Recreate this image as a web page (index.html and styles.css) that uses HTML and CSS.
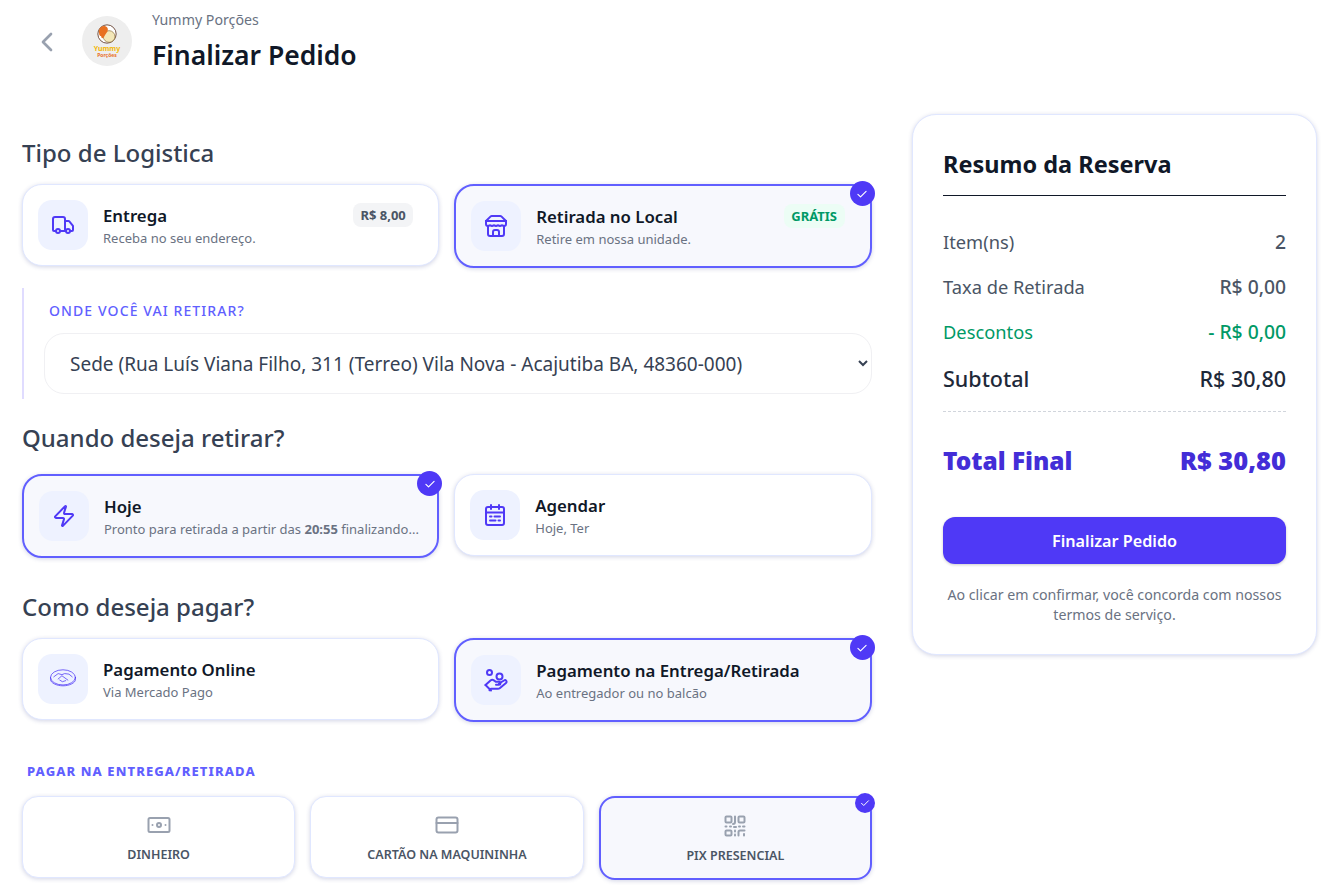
FILE: index.html
```html
<!DOCTYPE html>
<html lang="pt-BR">
<head>
    <meta charset="utf-8">
    <title>Finalizar Pedido</title>
    <link rel="stylesheet" href="styles.css">
</head>
<body>
    <div class="header">
        <svg class="back" viewBox="0 0 24 24"><path d="M15 18l-6-6 6-6"/></svg>
        <div class="logo">
            <svg class="logo-art" viewBox="0 0 24 24">
                <circle cx="12" cy="12" r="11" fill="#fff" stroke="#5a3320" stroke-width="1"/>
                <circle cx="14.500" cy="15" r="7" fill="#f3e7b8" stroke="#8a6a30" stroke-width=".8"/>
                <path d="M2.500 11C1.500 6 5 2 9 2.500c3.500.5 5 3.500 3.500 6.500l-3 4.500c-1 2-2 3.500-3 3.500-1.500 0-1.500-1.500-1.500-2.500-1.500 0-2.500-1.500-2.500-3.500z" fill="#e8701f"/>
            </svg>
            <span class="logo-name">Yummy</span>
            <span class="logo-sub">Porções</span>
        </div>
        <div>
            <div class="store-name">Yummy Porções</div>
            <h1>Finalizar Pedido</h1>
        </div>
    </div>

    <div class="page">
        <div class="left">
            <h2 class="first">Tipo de Logistica</h2>
            <div class="options">
                <div class="option">
                    <div class="option-icon">
                        <svg viewBox="0 0 24 24"><path d="M14 18V6a2 2 0 0 0-2-2H4a2 2 0 0 0-2 2v11a1 1 0 0 0 1 1h2"/><path d="M15 18H9"/><path d="M19 18h2a1 1 0 0 0 1-1v-3.650a1 1 0 0 0-.22-.624l-3.480-4.350A1 1 0 0 0 17.520 8H14"/><circle cx="17" cy="18" r="2"/><circle cx="7" cy="18" r="2"/></svg>
                    </div>
                    <div class="option-text">
                        <div class="option-title">Entrega</div>
                        <div class="option-sub">Receba no seu endereço.</div>
                    </div>
                    <span class="badge">R$ 8,00</span>
                </div>
                <div class="option selected">
                    <span class="check"><svg viewBox="0 0 24 24"><path d="M5 12.500l4.500 4.500L19 7.500"/></svg></span>
                    <div class="option-icon">
                        <svg viewBox="0 0 24 24"><path d="M2 7l4.410-4.410A2 2 0 0 1 7.830 2h8.340a2 2 0 0 1 1.420.59L22 7"/><path d="M4 12v8a2 2 0 0 0 2 2h12a2 2 0 0 0 2-2v-8"/><path d="M15 22v-4a2 2 0 0 0-2-2h-2a2 2 0 0 0-2 2v4"/><path d="M2 7h20"/><path d="M22 7v3a2 2 0 0 1-2 2 2.700 2.700 0 0 1-1.590-.63.7.7 0 0 0-.82 0A2.700 2.700 0 0 1 16 12a2.700 2.700 0 0 1-1.590-.63.7.7 0 0 0-.82 0A2.700 2.700 0 0 1 12 12a2.700 2.700 0 0 1-1.590-.63.7.7 0 0 0-.82 0A2.700 2.700 0 0 1 8 12a2.700 2.700 0 0 1-1.590-.63.7.7 0 0 0-.82 0A2.700 2.700 0 0 1 4 12a2 2 0 0 1-2-2V7"/></svg>
                    </div>
                    <div class="option-text">
                        <div class="option-title">Retirada no Local</div>
                        <div class="option-sub">Retire em nossa unidade.</div>
                    </div>
                    <span class="badge free">GRÁTIS</span>
                </div>
            </div>

            <div class="pickup">
                <div class="pickup-label">ONDE VOCÊ VAI RETIRAR?</div>
                <select class="pickup-select">
                    <option>Sede (Rua Luís Viana Filho, 311 (Terreo) Vila Nova - Acajutiba BA, 48360-000)</option>
                </select>
            </div>

            <h2 class="when">Quando deseja retirar?</h2>
            <div class="options">
                <div class="option selected">
                    <span class="check"><svg viewBox="0 0 24 24"><path d="M5 12.500l4.500 4.500L19 7.500"/></svg></span>
                    <div class="option-icon">
                        <svg viewBox="0 0 24 24"><path d="M4 14a1 1 0 0 1-.78-1.630l9.900-10.200a.5.5 0 0 1 .86.46l-1.920 6.020A1 1 0 0 0 13 10h7a1 1 0 0 1 .78 1.630l-9.900 10.200a.5.5 0 0 1-.86-.46l1.920-6.020A1 1 0 0 0 11 14z"/></svg>
                    </div>
                    <div class="option-text">
                        <div class="option-title">Hoje</div>
                        <div class="option-sub nowrap">Pronto para retirada a partir das <b>20:55</b> finalizando...</div>
                    </div>
                </div>
                <div class="option">
                    <div class="option-icon">
                        <svg viewBox="0 0 24 24"><rect x="3" y="4" width="18" height="18" rx="2"/><path d="M8 2v4"/><path d="M16 2v4"/><path d="M3 9.500h18"/><path d="M7 13.500h1.500"/><path d="M11.500 13.500H17"/><path d="M7 17.500h5.500"/><path d="M15.500 17.500H17"/></svg>
                    </div>
                    <div class="option-text">
                        <div class="option-title">Agendar</div>
                        <div class="option-sub">Hoje, Ter</div>
                    </div>
                </div>
            </div>

            <h2 class="how">Como deseja pagar?</h2>
            <div class="options">
                <div class="option">
                    <div class="option-icon">
                        <svg class="thin" viewBox="0 0 24 24"><ellipse cx="12" cy="10.500" rx="11.500" ry="7"/><path d="M.5 10.500v2c0 3 5.500 5.800 11.500 5.800s11.500-2.800 11.500-5.800v-2"/><path d="M3.500 10l4-3 3.500 1 2.500-1 4 .5 3 2.500"/><path d="M7.500 12l3.500-3 5.500 4"/><path d="M9 13l2.500 1.500 1.500-.5 1.500-.5"/></svg>
                    </div>
                    <div class="option-text">
                        <div class="option-title">Pagamento Online</div>
                        <div class="option-sub">Via Mercado Pago</div>
                    </div>
                </div>
                <div class="option selected">
                    <span class="check"><svg viewBox="0 0 24 24"><path d="M5 12.500l4.500 4.500L19 7.500"/></svg></span>
                    <div class="option-icon">
                        <svg viewBox="0 0 24 24"><circle cx="5.500" cy="4.500" r="2.500"/><circle cx="15.500" cy="8.500" r="3"/><path d="M1.500 17l5-4.500c1-.8 2-.9 3-.3l2.500 1.600h3a1.500 1.500 0 0 1 0 3h-3"/><path d="M15 15.500l5-3a1.600 1.600 0 0 1 2 2.500l-6 5a3.500 3.500 0 0 1-2.200.8H7l-1.500 1.500"/><path d="M1.500 17L7 22.500"/></svg>
                    </div>
                    <div class="option-text">
                        <div class="option-title">Pagamento na Entrega/Retirada</div>
                        <div class="option-sub">Ao entregador ou no balcão</div>
                    </div>
                </div>
            </div>

            <div class="pay-label">PAGAR NA ENTREGA/RETIRADA</div>
            <div class="methods">
                <div class="method">
                    <svg viewBox="0 0 24 24"><rect x="1.500" y="5" width="21" height="14" rx="1.500"/><circle cx="12" cy="12" r="2"/><path d="M5.500 12h.01"/><path d="M18.500 12h.01"/></svg>
                    <span>DINHEIRO</span>
                </div>
                <div class="method">
                    <svg viewBox="0 0 24 24"><rect x="1.500" y="4.500" width="21" height="15" rx="2"/><path d="M1.500 10h21"/></svg>
                    <span>CARTÃO NA MAQUININHA</span>
                </div>
                <div class="method selected">
                    <span class="check small"><svg viewBox="0 0 24 24"><path d="M5 12.500l4.500 4.500L19 7.500"/></svg></span>
                    <svg viewBox="0 0 24 24"><rect x="2.500" y="2.500" width="6" height="6" rx="1"/><rect x="15.500" y="2.500" width="6" height="6" rx="1"/><rect x="2.500" y="16.500" width="6" height="5" rx="1"/><path d="M12 2.500V8a2 2 0 0 1-2 2"/><path d="M2.500 12.500h1"/><path d="M7 12.500h1"/><path d="M11 13h2"/><path d="M16 12.500h1"/><path d="M20 12.500h1.500"/><path d="M12 16.500v1"/><path d="M12 20.500v1"/><path d="M15.500 21.500V18a1.500 1.500 0 0 1 1.500-1.500h4.500"/><path d="M21 20v1.500"/></svg>
                    <span>PIX PRESENCIAL</span>
                </div>
            </div>
        </div>

        <div class="summary">
            <h3>Resumo da Reserva</h3>
            <div class="rows">
                <div class="row"><span>Item(ns)</span><strong>2</strong></div>
                <div class="row"><span>Taxa de Retirada</span><strong>R$ 0,00</strong></div>
                <div class="row discount"><span>Descontos</span><strong>- R$ 0,00</strong></div>
            </div>
            <div class="row subtotal"><span>Subtotal</span><strong>R$ 30,80</strong></div>
            <div class="row total"><span>Total Final</span><strong>R$ 30,80</strong></div>
            <button class="confirm">Finalizar Pedido</button>
            <p class="terms">Ao clicar em confirmar, você concorda com nossos termos de serviço.</p>
        </div>
    </div>
</body>
</html>
```

FILE: styles.css
```css
:root {
    --primary: #4f39f6;
    --primary-dark: #432dd7;
    --primary-soft: #615fff;
    --border: #e0e7ff;
    --icon-bg: #eef2ff;
    --selected-bg: #f7f8fd;
    --ink: #101828;
    --heading: #364153;
    --muted: #6a7282;
    --green: #009966;
}

* {
    box-sizing: border-box;
}

body {
    margin: 0;
    background: #ffffff;
    color: var(--ink);
    font-family: "Noto Sans", "Open Sans", sans-serif;
}

.header {
    display: flex;
    align-items: center;
    padding: 10px 0 0 31px;
}

.back {
    width: 32px;
    height: 32px;
    margin-right: 19px;
    fill: none;
    stroke: #99a1af;
    stroke-width: 2;
    stroke-linecap: round;
    stroke-linejoin: round;
}

.logo {
    width: 50px;
    height: 50px;
    margin-right: 20px;
    margin-bottom: 1px;
    border-radius: 50%;
    background: #eeeeee;
    display: flex;
    flex-direction: column;
    align-items: center;
    padding-top: 8px;
}

.logo-art {
    width: 20px;
    height: 20px;
    margin-bottom: 1px;
}

.logo-name {
    color: #f2b705;
    font-size: 7px;
    font-weight: 700;
    line-height: 7px;
}

.logo-sub {
    color: #e8701f;
    font-size: 5px;
    font-weight: 700;
    line-height: 6px;
}

.store-name {
    color: var(--muted);
    font-size: 14.2px;
    line-height: 20px;
}

h1 {
    margin: 7px 0 0;
    font-size: 26.5px;
    font-weight: 600;
    line-height: 36px;
}

.page {
    display: grid;
    grid-template-columns: 849.5px 405px;
    column-gap: 40.5px;
    align-items: start;
    margin-top: 41px;
    padding-left: 22px;
}

h2 {
    margin: 0;
    color: var(--heading);
    font-size: 24px;
    font-weight: 500;
    line-height: 32px;
}

h2.first {
    margin-top: 23px;
    margin-bottom: 15px;
}

h2.when {
    margin-top: 23px;
    margin-bottom: 20px;
}

h2.how {
    margin-top: 33px;
    margin-bottom: 15px;
}

.options {
    display: grid;
    grid-template-columns: 1fr 1fr;
    column-gap: 15px;
    align-items: start;
}

.option {
    position: relative;
    display: flex;
    align-items: center;
    gap: 15px;
    min-width: 0;
    padding: 15px;
    background: #ffffff;
    border: 1px solid var(--border);
    border-radius: 20px;
    box-shadow: 0 1px 4px rgba(55, 65, 140, 0.22);
}

.option.selected,
.method.selected {
    background: var(--selected-bg);
    border: 2px solid var(--primary-soft);
}

.option-icon {
    flex: none;
    width: 50px;
    height: 50px;
    border-radius: 14px;
    background: var(--icon-bg);
    display: flex;
    align-items: center;
    justify-content: center;
}

.option-icon svg {
    width: 24px;
    height: 24px;
    fill: none;
    stroke: var(--primary);
    stroke-width: 2;
    stroke-linecap: round;
    stroke-linejoin: round;
}

.option-icon svg.thin {
    width: 26px;
    height: 26px;
    stroke-width: 0.7;
}

.option-text {
    flex: 1;
    min-width: 0;
}

.option-title {
    font-size: 16.8px;
    font-weight: 600;
    line-height: 24px;
}

.option-sub {
    margin-top: 1px;
    color: var(--muted);
    font-size: 13px;
    line-height: 18px;
}

.nowrap {
    white-space: nowrap;
}

.badge {
    align-self: flex-start;
    flex: none;
    margin: 3px 10px 0 0;
    padding: 0 7.5px;
    border-radius: 8px;
    background: #f3f4f6;
    color: #4a5565;
    font-size: 13px;
    font-weight: 700;
    line-height: 24px;
}

.badge.free {
    background: #ecfdf5;
    color: var(--green);
}

.check {
    position: absolute;
    top: -5px;
    right: -5px;
    width: 25px;
    height: 25px;
    border-radius: 50%;
    background: var(--primary);
    display: flex;
    align-items: center;
    justify-content: center;
}

.check svg {
    width: 14px;
    height: 14px;
    fill: none;
    stroke: #ffffff;
    stroke-width: 2;
    stroke-linecap: round;
    stroke-linejoin: round;
}

.check.small {
    width: 20px;
    height: 20px;
}

.check.small svg {
    width: 12px;
    height: 12px;
}

.pickup {
    margin-top: 20px;
    padding: 13px 0 5px 20px;
    border-left: 2px solid #e0dcff;
}

.pickup-label {
    margin-left: 5px;
    margin-bottom: 12px;
    color: var(--primary-soft);
    font-size: 14px;
    font-weight: 500;
    letter-spacing: 1.1px;
    line-height: 20px;
}

.pickup-select {
    display: block;
    width: 100%;
    height: 61px;
    padding: 0 4px 0 21px;
    background: #ffffff;
    border: 1px solid #f0f0f3;
    border-radius: 20px;
    color: var(--heading);
    font-family: inherit;
    font-size: 19px;
}

.pay-label {
    margin: 40px 0 16px 5px;
    color: var(--primary-soft);
    font-size: 13px;
    font-weight: 800;
    letter-spacing: 1.1px;
    line-height: 18px;
}

.methods {
    display: grid;
    grid-template-columns: repeat(3, 1fr);
    column-gap: 15px;
    align-items: start;
    width: 850px;
    padding-bottom: 14px;
}

.method {
    position: relative;
    display: flex;
    flex-direction: column;
    align-items: center;
    gap: 9px;
    padding: 16px 8px 13px;
    background: #ffffff;
    border: 1px solid var(--border);
    border-radius: 16px;
    box-shadow: 0 1px 4px rgba(55, 65, 140, 0.22);
}

.method > svg {
    width: 24px;
    height: 24px;
    fill: none;
    stroke: #99a1af;
    stroke-width: 2;
    stroke-linecap: round;
    stroke-linejoin: round;
}

.method span:last-child {
    color: #4a5565;
    font-size: 12.5px;
    font-weight: 600;
    line-height: 18px;
}

.summary {
    padding: 31px 30px 29px;
    background: #ffffff;
    border: 1px solid var(--border);
    border-radius: 24px;
    box-shadow: 0 1px 4px rgba(55, 65, 140, 0.22);
}

h3 {
    margin: 0;
    padding-bottom: 13px;
    border-bottom: 1px solid var(--ink);
    font-size: 23.5px;
    font-weight: 700;
    line-height: 36px;
}

.rows {
    display: flex;
    flex-direction: column;
    gap: 19px;
    margin-top: 33px;
}

.row {
    display: flex;
    justify-content: space-between;
    align-items: center;
    color: #4a5565;
    font-size: 18.3px;
    line-height: 26px;
}

.row strong {
    font-size: 19.3px;
    font-weight: 500;
}

.row.discount {
    color: var(--green);
}

.row.subtotal {
    margin-top: 20px;
    padding-bottom: 18px;
    border-bottom: 1px dashed #d1d5dc;
    color: #1e2939;
    font-size: 21.5px;
    font-weight: 500;
    line-height: 28px;
}

.row.subtotal strong {
    font-size: 21.5px;
}

.row.total {
    align-items: baseline;
    margin-top: 31px;
    color: var(--primary-dark);
    font-size: 24.4px;
    font-weight: 900;
    line-height: 34px;
}

.row.total strong {
    font-size: 25.5px;
    font-weight: 900;
}

.confirm {
    display: block;
    width: 100%;
    height: 47px;
    margin-top: 39px;
    padding-top: 1px;
    border: 0;
    border-radius: 12px;
    background: var(--primary);
    box-shadow: 0 1px 3px rgba(0, 0, 0, 0.2);
    color: #ffffff;
    font-family: inherit;
    font-size: 16.2px;
    font-weight: 600;
}

.terms {
    margin: 21px 0 0;
    color: var(--muted);
    font-size: 14.2px;
    line-height: 20px;
    text-align: center;
}
```
